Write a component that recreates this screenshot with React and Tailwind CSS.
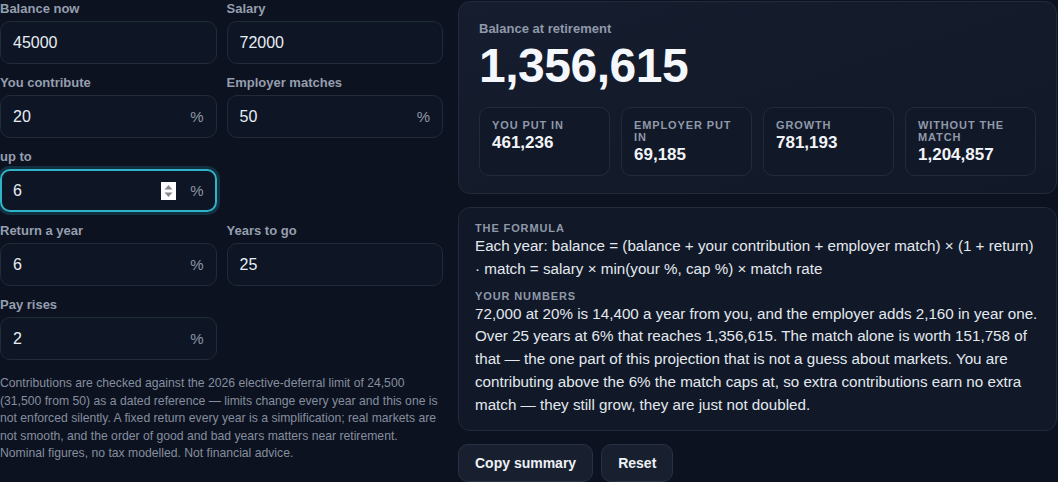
import React from 'react';

const font = "font-['Liberation_Sans',Arial,sans-serif]";

function Spinner() {
    return (
        <svg width="15" height="18" viewBox="0 0 15 18" className="mr-[14px] shrink-0">
            <rect x="0" y="0" width="15" height="18" fill="#ffffff" />
            <path d="M3.5 7.5 L7.5 3 L11.5 7.5 Z" fill="#8a8a8a" />
            <path d="M3.5 10.5 L7.5 15 L11.5 10.5 Z" fill="#8a8a8a" />
        </svg>
    );
}

function Field({ label, value, suffix, focused }) {
    return (
        <div>
            <div className="text-[13px] font-bold leading-[18px] text-[#959eae] mb-[3px]">{label}</div>
            <div
                className={
                    focused
                        ? 'flex items-center h-[43px] rounded-[10px] border-2 border-[#2fb3c8] bg-[#0e1524] px-[11px] shadow-[0_0_0_3px_rgba(40,170,195,0.2)]'
                        : 'flex items-center h-[43px] rounded-[10px] border border-[#222b3a] bg-[#0e1524] px-3'
                }
            >
                <span className="flex-1 text-base text-[#e8edf4]">{value}</span>
                {focused && <Spinner />}
                {suffix && <span className="mt-[2px] text-[15px] text-[#8d96a6]">%</span>}
            </div>
        </div>
    );
}

function Stat({ label, value }) {
    return (
        <div className="rounded-[10px] border border-[#222b3b] bg-[#111827] px-3 pt-[11px] pb-[10px]">
            <div className="text-[11px] font-bold leading-[12px] tracking-[0.08em] uppercase text-[#8f99aa]">{label}</div>
            <div className="mt-[2px] text-[17px] font-bold leading-5 text-[#f1f4f8]">{value}</div>
        </div>
    );
}

export default function App() {
    return (
        <div className={`${font} min-h-screen w-[1058px] h-[482px] overflow-hidden bg-[#0c1220] flex gap-[15px]`}>
            {/* Inputs */}
            <div className="w-[443px] shrink-0">
                <div className="grid grid-cols-2 gap-x-[10px] gap-y-[10px]">
                    <Field label="Balance now" value="45000" />
                    <Field label="Salary" value="72000" />
                    <Field label="You contribute" value="20" suffix />
                    <Field label="Employer matches" value="50" suffix />
                    <Field label="up to" value="6" suffix focused />
                    <div />
                    <Field label="Return a year" value="6" suffix />
                    <Field label="Years to go" value="25" />
                    <Field label="Pay rises" value="2" suffix />
                </div>
                <p className="mt-[15px] text-[12.2px] leading-[17.6px] text-[#858e9e]">
                    Contributions are checked against the 2026 elective-deferral limit of 24,500 (31,500 from 50) as a dated reference — limits change every year and this one is not enforced silently. A fixed return every year is a simplification; real markets are not smooth, and the order of good and bad years matters near retirement. Nominal figures, no tax modelled. Not financial advice.
                </p>
            </div>

            {/* Results */}
            <div className="w-[599px] shrink-0 pt-[1px]">
                <div className="rounded-[12px] border border-[#222b3b] bg-gradient-to-br from-[#151d2e] to-[#111928] px-5 pt-5 pb-[17px]">
                    <div className="text-[13px] font-bold leading-[13px] text-[#8f99aa]">Balance at retirement</div>
                    <div className="mt-[7px] text-5xl font-bold leading-none tracking-[-0.01em] text-[#f4f7fb]">1,356,615</div>
                    <div className="mt-[17px] grid grid-cols-4 gap-[11px]">
                        <Stat label="You put in" value="461,236" />
                        <Stat label="Employer put in" value="69,185" />
                        <Stat label="Growth" value="781,193" />
                        <Stat label="Without the match" value="1,204,857" />
                    </div>
                </div>

                <div className="mt-[13px] rounded-[12px] border border-[#222b3b] bg-[#111827] px-4 pt-[14px] pb-[13px]">
                    <div className="text-[11px] font-bold leading-[13px] tracking-[0.08em] uppercase text-[#8f99aa]">The formula</div>
                    <div className="text-[15.2px] leading-[1.5] text-[#e3e8ef]">
                        <div>Each year: balance = (balance + your contribution + employer match) × (1 + return)</div>
                        <div>· match = salary × min(your %, cap %) × match rate</div>
                    </div>
                    <div className="mt-[9px] text-[11px] font-bold leading-[13px] tracking-[0.08em] uppercase text-[#8f99aa]">Your numbers</div>
                    <p className="text-[15.2px] leading-[1.5] text-[#e3e8ef]">
                        72,000 at 20% is 14,400 a year from you, and the employer adds 2,160 in year one. Over 25 years at 6% that reaches 1,356,615. The match alone is worth 151,758 of that — the one part of this projection that is not a guess about markets. You are contributing above the 6% the match caps at, so extra contributions earn no extra match — they still grow, they are just not doubled.
                    </p>
                </div>

                <div className="mt-[13px] flex gap-2">
                    <button className="h-[38px] rounded-[10px] border border-[#283142] bg-[#182030] px-4 text-sm font-bold text-[#eef2f7]">
                        Copy summary
                    </button>
                    <button className="h-[38px] rounded-[10px] border border-[#283142] bg-[#182030] px-4 text-sm font-bold text-[#eef2f7]">
                        Reset
                    </button>
                </div>
            </div>
        </div>
    );
}
